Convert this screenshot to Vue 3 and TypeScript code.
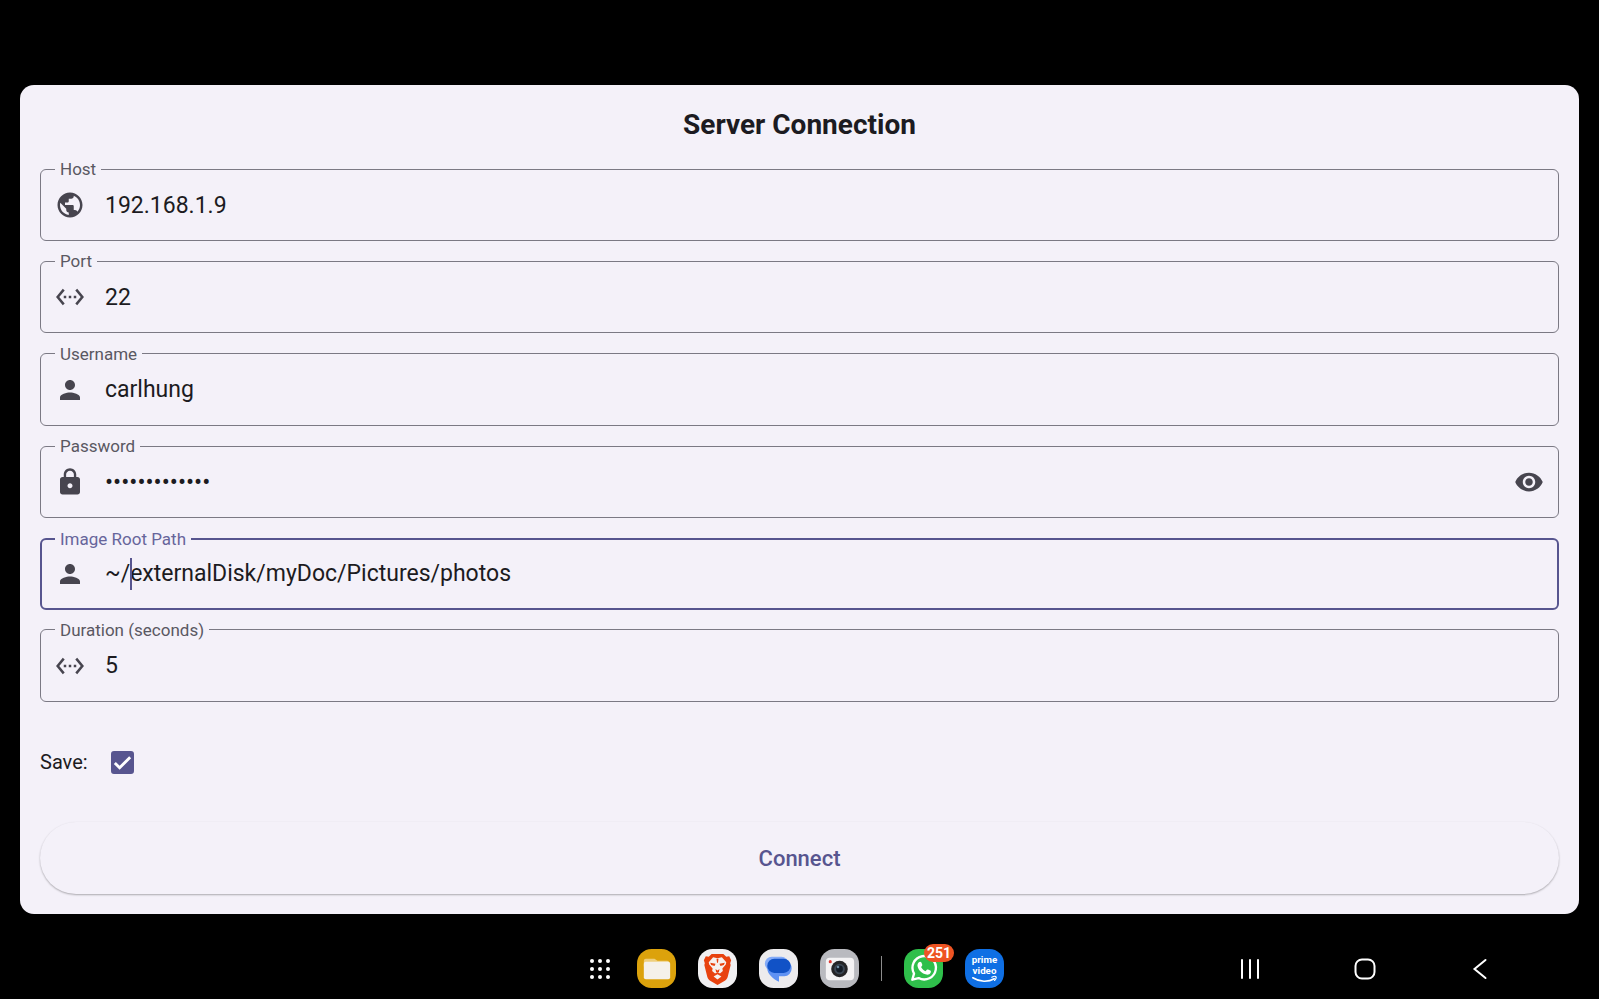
<script setup lang="ts">
import { reactive, ref } from 'vue'

type IconName = 'globe' | 'ethernet' | 'person' | 'lock'

interface Field {
  id: string
  label: string
  icon: IconName
  value: string
  secret?: boolean
  active?: boolean
}

const iconPaths: Record<IconName, string> = {
  globe:
    'M12 2C6.48 2 2 6.48 2 12s4.48 10 10 10 10-4.48 10-10S17.52 2 12 2zm-1 17.93c-3.95-.49-7-3.85-7-7.93 0-.62.08-1.21.21-1.79L9 15v1c0 1.1.9 2 2 2v1.93zm6.9-2.54c-.26-.81-1-1.39-1.9-1.39h-1v-3c0-.55-.45-1-1-1H8v-2h2c.55 0 1-.45 1-1V7h2c1.1 0 2-.9 2-2v-.41c2.93 1.19 5 4.06 5 7.41 0 2.08-.8 3.97-2.1 5.39z',
  ethernet:
    'M7.77 6.76L6.23 5.48.82 12l5.41 6.52 1.54-1.28L3.42 12l4.35-5.24zM7 13h2v-2H7v2zm10-2h-2v2h2v-2zm-6 2h2v-2h-2v2zm6.77-7.52l-1.54 1.28L20.58 12l-4.35 5.24 1.54 1.28L23.18 12l-5.41-6.52z',
  person:
    'M12 12c2.21 0 4-1.79 4-4s-1.79-4-4-4-4 1.79-4 4 1.79 4 4 4zm0 2c-2.67 0-8 1.34-8 4v2h16v-2c0-2.66-5.33-4-8-4z',
  lock:
    'M18 8h-1V6c0-2.76-2.24-5-5-5S7 3.24 7 6v2H6c-1.1 0-2 .9-2 2v10c0 1.1.9 2 2 2h12c1.1 0 2-.9 2-2V10c0-1.1-.9-2-2-2zm-6 9c-1.1 0-2-.9-2-2s.9-2 2-2 2 .9 2 2-.9 2-2 2zm3.1-9H8.9V6c0-1.71 1.39-3.1 3.1-3.1 1.71 0 3.1 1.39 3.1 3.1v2z',
}

const fields = reactive<Field[]>([
  { id: 'host', label: 'Host', icon: 'globe', value: '192.168.1.9' },
  { id: 'port', label: 'Port', icon: 'ethernet', value: '22' },
  { id: 'username', label: 'Username', icon: 'person', value: 'carlhung' },
  { id: 'password', label: 'Password', icon: 'lock', value: 'slideshow1234', secret: true },
  {
    id: 'root-path',
    label: 'Image Root Path',
    icon: 'person',
    value: '~/externalDisk/myDoc/Pictures/photos',
    active: true,
  },
  { id: 'duration', label: 'Duration (seconds)', icon: 'ethernet', value: '5' },
])

const save = ref(true)
const showPassword = ref(false)
</script>

<template>
  <div class="screen">
    <main class="card">
      <h1 class="title">Server Connection</h1>
      <form class="form" @submit.prevent>
        <div class="fields">
          <fieldset v-for="f in fields" :key="f.id" class="field" :class="{ active: f.active }">
            <legend><label :for="f.id">{{ f.label }}</label></legend>
            <div class="row">
              <svg class="icon" viewBox="0 0 24 24" aria-hidden="true"><path :d="iconPaths[f.icon]" /></svg>
              <div class="entry">
                <input
                  :id="f.id"
                  v-model="f.value"
                  :type="f.secret && !showPassword ? 'password' : 'text'"
                  autocomplete="off"
                  spellcheck="false"
                />
                <span v-if="f.active" class="caret"></span>
              </div>
              <button
                v-if="f.secret"
                type="button"
                class="reveal"
                aria-label="Show password"
                @click="showPassword = !showPassword"
              >
                <svg class="icon" viewBox="0 0 24 24" aria-hidden="true">
                  <path
                    d="M12 4.5C7 4.5 2.73 7.61 1 12c1.73 4.39 6 7.5 11 7.5s9.27-3.11 11-7.5c-1.73-4.39-6-7.5-11-7.5zM12 17c-2.76 0-5-2.24-5-5s2.24-5 5-5 5 2.24 5 5-2.24 5-5 5zm0-8c-1.66 0-3 1.34-3 3s1.34 3 3 3 3-1.34 3-3-1.34-3-3-3z"
                  />
                </svg>
              </button>
            </div>
          </fieldset>
        </div>

        <div class="save">
          <label for="save">Save:</label>
          <span class="check">
            <input id="save" v-model="save" type="checkbox" />
            <svg v-if="save" viewBox="0 0 24 24" aria-hidden="true"><path d="M4 12.5l5 5L20 6.5" /></svg>
          </span>
        </div>

        <button type="submit" class="connect">Connect</button>
      </form>
    </main>

    <footer class="taskbar">
      <div class="dock">
        <button class="apps" aria-label="All apps">
          <svg viewBox="0 0 22 22">
            <g fill="#fff">
              <template v-for="y in 3" :key="y">
                <circle v-for="x in 3" :key="x" :cx="x * 8 - 5" :cy="y * 8 - 5" r="2" />
              </template>
            </g>
          </svg>
        </button>

        <button class="app" aria-label="My Files">
          <svg viewBox="0 0 40 40">
            <rect width="40" height="40" rx="15" fill="#dca20c" />
            <path d="M7 12a2 2 0 0 1 2-2h9l3 2h10a2 2 0 0 1 2 2v4H7z" fill="#efcf7d" />
            <rect x="7" y="13" width="27" height="18" rx="2" fill="#f5f1ea" />
          </svg>
        </button>

        <button class="app" aria-label="Brave">
          <svg viewBox="0 0 40 40">
            <rect width="40" height="40" rx="15" fill="#f1f0f2" />
            <path
              d="M14 5h12l3 3 3-.5 2 4-1 3 .5 2-3 12c-.5 2-1.5 3-3 4L20 37l-7.500-4.500c-1.500-1-2.500-2-3-4l-3-12 .5-2-1-3 2-4 3 .5z"
              fill="#e8420f"
            />
            <path
              d="M15.500 8.500l4.500 1 4.500-1 4.500 5-.5 2.500-3.500 4 .5 2.500-3 2.500-2.500-1.500-2.500 1.500-3-2.500.5-2.500-3.500-4-.5-2.500z"
              fill="#f6f1ef"
            />
            <path d="M12.500 14l5.500 1-1 2.500-3.500-1zM27.500 14l-5.500 1 1 2.500 3.500-1zM19 10h2l-.5 4h-1zM18 20.500l2 1.500 2-1.500-.5 3h-3z" fill="#e8420f" />
            <path d="M20 26l4 2.300-4 3-4-3z" fill="#f6f1ef" />
          </svg>
        </button>

        <button class="app" aria-label="Messages">
          <svg viewBox="0 0 40 40">
            <rect width="40" height="40" rx="15" fill="#ecebed" />
            <rect x="6" y="8" width="24" height="14" rx="7" fill="#84abf8" />
            <path d="M17 12h9a7.500 8 0 0 1 0 16h-5.500v5.500C15 31 8.500 26 8.500 20a8.500 8 0 0 1 8.500-8z" fill="#5f92f3" />
            <rect x="8.500" y="10" width="24" height="14.500" rx="7.200" fill="#1152c6" />
          </svg>
        </button>

        <button class="app" aria-label="Camera">
          <svg viewBox="0 0 40 40">
            <rect width="40" height="40" rx="15" fill="#b9babf" />
            <rect x="6" y="9" width="29" height="23" rx="4" fill="#f4f3f4" />
            <circle cx="10.500" cy="13" r="1.600" fill="#df3a35" />
            <circle cx="20" cy="20.500" r="8.500" fill="#242426" />
            <circle cx="20" cy="20.500" r="5.500" fill="#3b4652" />
            <circle cx="20" cy="20.500" r="3.500" fill="#121a24" />
            <circle cx="18.500" cy="18.500" r="1.300" fill="#6f8da3" />
          </svg>
        </button>

        <span class="divider"></span>

        <button class="app" aria-label="WhatsApp">
          <svg viewBox="0 0 40 40">
            <rect width="40" height="40" rx="15" fill="#2fbf4b" />
            <path d="M8.500 31.500l1.800-6.300a12 12 0 1 1 4.700 4.600z" fill="none" stroke="#fff" stroke-width="2.400" stroke-linejoin="round" />
            <path
              d="M15.300 13.500c.8-.8 2-.7 2.400.2l1 2.300c.2.500 0 1-.3 1.400l-.9 1.100c1 2 2.500 3.400 4.600 4.300l1.300-1.500c.4-.4.800-.5 1.300-.3l2.200 1.100c.8.400.8 1 .5 1.900-.7 1.800-2.600 2.600-4.500 2.200-4.600-1-8-4.300-9-8.500-.3-1.500.2-3.200 1.400-4.200z"
              fill="#fff"
            />
          </svg>
          <span class="badge">251</span>
        </button>

        <button class="app" aria-label="Prime Video">
          <svg viewBox="0 0 40 40">
            <rect width="40" height="40" rx="15" fill="#0f6fe4" />
            <text x="20" y="14" class="prime">prime</text>
            <text x="20" y="26" class="prime">video</text>
            <path d="M8 29.500c7 4.500 16 4.500 22 1" fill="none" stroke="#fff" stroke-width="1.600" stroke-linecap="round" />
            <path d="M27.500 29c2-1 4-.9 4.300-.4s-.2 2.400-1.500 3.700" fill="none" stroke="#fff" stroke-width="1.200" stroke-linecap="round" />
          </svg>
        </button>
      </div>

      <nav class="nav" aria-label="System">
        <button aria-label="Recent apps">
          <svg viewBox="0 0 24 24"><path d="M4 3v18M12 3v18M20 3v18" /></svg>
        </button>
        <button aria-label="Home">
          <svg viewBox="0 0 24 24"><rect x="2.500" y="2.500" width="19" height="19" rx="6.500" /></svg>
        </button>
        <button aria-label="Back">
          <svg viewBox="0 0 24 24"><path d="M17.500 3L6.500 12l11 9" /></svg>
        </button>
      </nav>
    </footer>
  </div>
</template>

<style>
body {
  margin: 0;
  background: #000;
}
</style>

<style scoped>
* {
  box-sizing: border-box;
}

.screen {
  display: flex;
  flex-direction: column;
  min-height: 100vh;
  padding-top: 85px;
  background: #000;
  color: #1c1b21;
  font-family: Roboto, sans-serif;
}

button {
  padding: 0;
  border: 0;
  background: none;
  font: inherit;
  color: inherit;
}

svg {
  display: block;
}

.card {
  display: flex;
  flex: 1;
  flex-direction: column;
  margin: 0 20px;
  padding: 20px;
  border-radius: 14px;
  background: #f4f1f9;
}

.title {
  margin: 0 0 14px;
  font-size: 28px;
  font-weight: 700;
  line-height: 40px;
  text-align: center;
}

.form {
  display: flex;
  flex: 1;
  flex-direction: column;
}

.fields {
  display: flex;
  flex: 1;
  flex-direction: column;
  justify-content: space-between;
  gap: 10px;
}

.field {
  min-width: 0;
  margin: 0;
  padding: 11px 14px 20px;
  border: 1px solid #7b7984;
  border-radius: 6px;
}

.field.active {
  padding: 10px 13px 19px;
  border: 2px solid #57558f;
}

legend {
  padding: 0 5px;
  color: #5a5862;
  font-size: 17px;
  line-height: 20px;
}

.active legend {
  color: #67659b;
}

legend label {
  display: block;
}

.row {
  display: flex;
  align-items: center;
  height: 30px;
}

.icon {
  flex: none;
  width: 30px;
  height: 30px;
  fill: #47454f;
}

.entry {
  position: relative;
  flex: 1;
  margin-left: 20px;
}

.entry input {
  display: block;
  width: 100%;
  height: 30px;
  padding: 0;
  border: 0;
  outline: none;
  background: transparent;
  color: #1c1b21;
  font-family: inherit;
  font-size: 23px;
}

.entry input[type="password"] {
  font-size: 24px;
}

.caret {
  position: absolute;
  top: -1px;
  left: 25px;
  width: 2px;
  height: 32px;
  background: #57558f;
}

.save {
  display: flex;
  align-items: center;
  gap: 23px;
  height: 60px;
  margin-top: 30px;
  font-size: 20px;
}

.check {
  position: relative;
  width: 23px;
  height: 23px;
}

.check input {
  display: block;
  width: 23px;
  height: 23px;
  margin: 0;
  appearance: none;
  border: 2px solid #57558f;
  border-radius: 3px;
}

.check input:checked {
  background: #57558f;
}

.check svg {
  position: absolute;
  inset: 0;
  pointer-events: none;
  fill: none;
  stroke: #fff;
  stroke-width: 3;
}

.connect {
  height: 72px;
  margin-top: 30px;
  border-radius: 36px;
  background: #f4f1f9;
  box-shadow: 0 1px 2px rgba(0, 0, 0, 0.3);
  color: #57558f;
  font-size: 22px;
  font-weight: 500;
}

.taskbar {
  display: grid;
  grid-template-columns: 1fr auto 1fr;
  align-items: center;
  padding: 35px 107px 11px 101px;
}

.dock {
  display: flex;
  grid-column: 2;
  align-items: center;
  gap: 22px;
}

.apps {
  width: 22px;
  margin-right: 4px;
}

.app {
  position: relative;
  width: 39px;
  height: 39px;
}

.divider {
  width: 1px;
  height: 25px;
  background: #8c8c8c;
}

.badge {
  position: absolute;
  top: -5px;
  left: 20px;
  padding: 0 3px;
  border-radius: 9px;
  background: #ee5423;
  color: #fff;
  font-size: 14px;
  font-weight: 700;
  line-height: 18px;
}

.prime {
  fill: #fff;
  font-family: Roboto, sans-serif;
  font-size: 10px;
  font-weight: 700;
  text-anchor: middle;
}

.nav {
  display: flex;
  justify-content: flex-end;
  gap: 91px;
}

.nav svg {
  width: 24px;
  height: 24px;
  fill: none;
  stroke: #fff;
  stroke-width: 2;
  stroke-linecap: round;
}
</style>
